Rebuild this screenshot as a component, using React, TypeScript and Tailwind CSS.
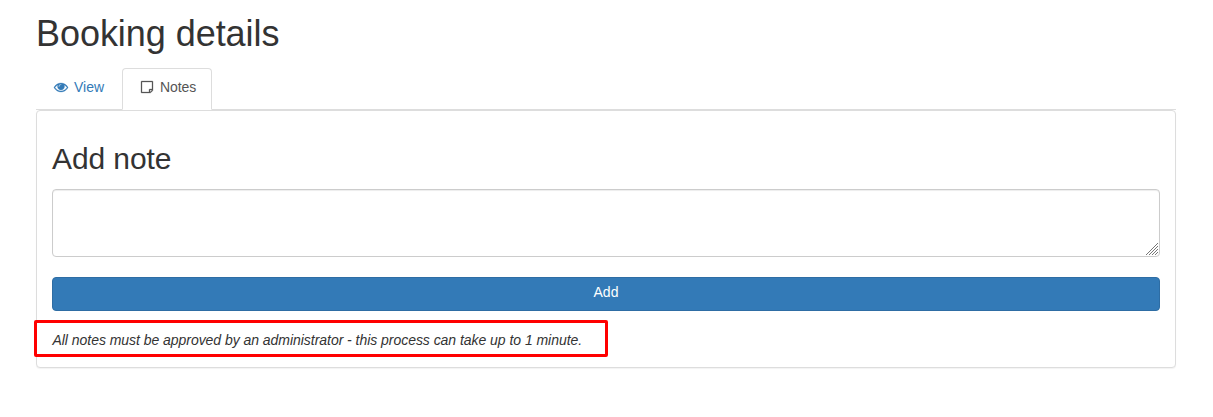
import type { ReactNode } from "react";

function Icon({ d }: { d: string }) {
  return (
    <svg
      viewBox="0 0 1792 1792"
      className="mr-1 h-[14px] w-[18px] shrink-0"
      fill="currentColor"
      stroke="currentColor"
      strokeWidth={36}
      aria-hidden="true"
    >
      <path d={d} />
    </svg>
  );
}

const EYE =
  "M1664 960q-152-236-381-353 61 104 61 225 0 185-131.5 316.5t-316.5 131.5-316.5-131.5-131.5-316.5q0-121 61-225-229 117-381 353 133 205 333.5 326.5t434.5 121.5 434.5-121.5 333.5-326.5zm-720-384q0-20-14-34t-34-14q-125 0-214.5 89.5t-89.5 214.5q0 20 14 34t34 14 34-14 14-34q0-86 61-147t147-61q20 0 34-14t14-34zm848 384q0 34-20 69-140 230-376.5 368.5t-499.5 138.5-499.5-139-376.5-368q-20-35-20-69t20-69q140-229 376.5-368t499.5-139 499.5 139 376.5 368q20 35 20 69z";

const STICKY_NOTE =
  "M1528 1280h-248v248q29-10 41-22l185-185q12-12 22-41zm-280-128h288v-896h-1280v1280h896v-288q0-40 28-68t68-28zm416-928v1024q0 40-20 88t-48 76l-184 184q-28 28-76 48t-88 20h-1024q-40 0-68-28t-28-68v-1344q0-40 28-68t68-28h1344q40 0 68 28t28 68z";

function Tab({ active, icon, children }: { active?: boolean; icon: string; children: ReactNode }) {
  return (
    <li className="-mb-px">
      <a
        href="#"
        className={
          active
            ? "mr-0.5 flex h-[42px] w-[90px] items-center rounded-t border border-[#ddd] border-b-white bg-white px-[15px] pb-1 tracking-[-0.1px] text-[#555]"
            : "mr-0.5 flex h-[42px] w-[84px] items-center rounded-t border border-transparent px-[15px] pb-1 text-[#337ab7]"
        }
      >
        <Icon d={icon} />
        {children}
      </a>
    </li>
  );
}

export default function App() {
  return (
    <div className="h-[417px] overflow-hidden bg-white pr-[37px] pl-9 font-['Liberation_Sans',Arial,sans-serif] text-sm leading-5 text-[#333]">
      <h1 className="mb-[14px] pt-[14px] text-4xl leading-10 font-medium tracking-[-0.05px]">
        Booking details
      </h1>
      <ul className="flex border-b border-[#ddd]">
        <Tab icon={EYE}>View</Tab>
        <Tab icon={STICKY_NOTE} active>
          Notes
        </Tab>
      </ul>
      <section className="h-[258px] rounded border border-[#ddd] bg-white px-[15px] pt-[31px] shadow-[0_1px_1px_rgba(0,0,0,0.05)]">
        <h2 className="mb-[14px] text-3xl leading-[33px] font-medium tracking-[-0.1px]">Add note</h2>
        <div className="relative">
          <textarea
            aria-label="Note"
            className="block h-[68px] w-full resize-none rounded border border-[#ccc] bg-white px-3 py-1.5 shadow-[inset_0_1px_1px_rgba(0,0,0,0.075)]"
          />
          <svg
            className="pointer-events-none absolute right-[2px] bottom-[2px] h-3 w-3"
            viewBox="0 0 12 12"
            fill="none"
            stroke="#777"
            aria-hidden="true"
          >
            <path d="M0 12 12 0M3 12l9-9M6 12l6-6M9 12l3-3" />
          </svg>
        </div>
        <button className="mt-5 block h-[34px] w-full rounded border border-[#2e6da4] bg-[#337ab7] pb-1 text-white">
          Add
        </button>
        <div className="mt-[9px] -ml-[18px] flex h-[37px] w-[574px] items-center rounded-[2px] border-3 border-[#f00] pt-0.5 pl-[15.5px]">
          <p className="tracking-[-0.04px] whitespace-nowrap italic">
            All notes must be approved by an administrator - this process can take up to 1 minute.
          </p>
        </div>
      </section>
    </div>
  );
}
